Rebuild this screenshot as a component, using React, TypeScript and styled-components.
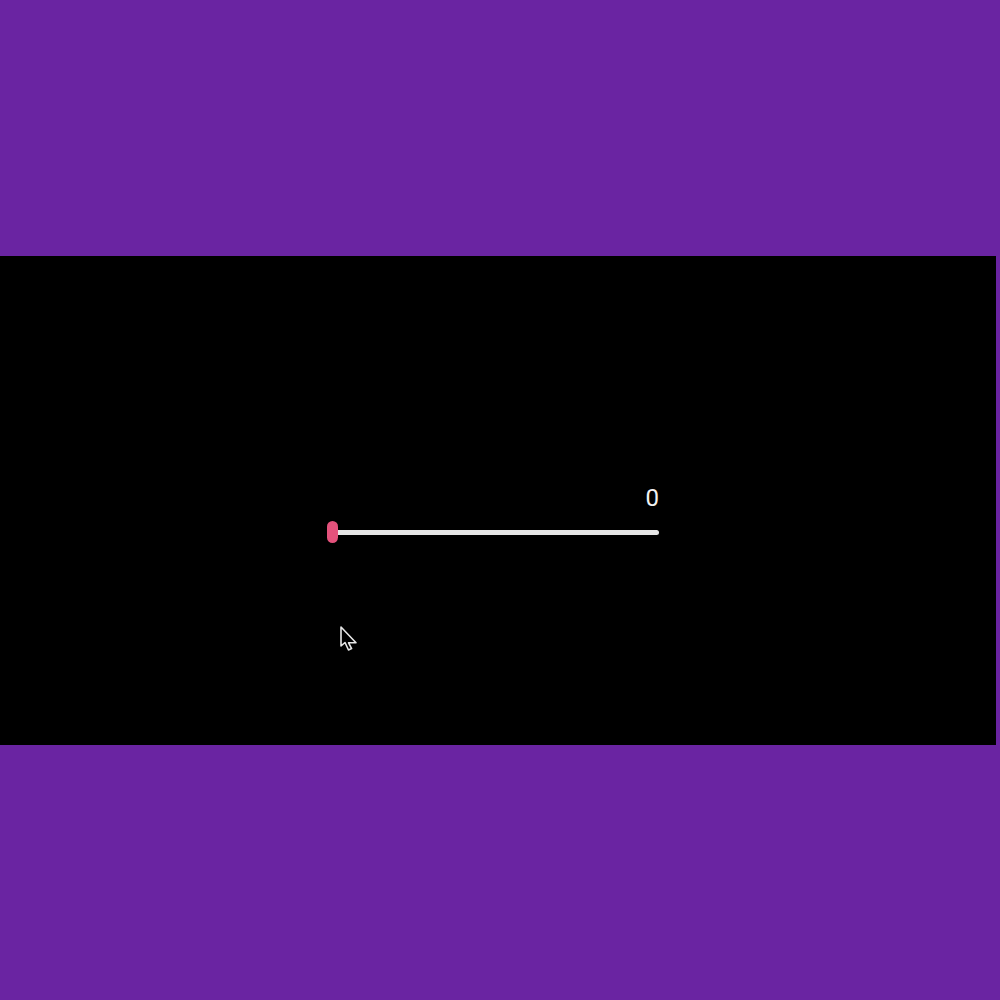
import React, { useState } from 'react';
import styled, { createGlobalStyle } from 'styled-components';

const GlobalStyle = createGlobalStyle`
  html, body {
    margin: 0;
    padding: 0;
    background: #6a24a2;
  }
  body {
    font-family: Roboto, "Liberation Sans", sans-serif;
  }
`;

const Page = styled.div`
  width: 1000px;
  height: 1000px;
  padding-top: 256px;
  box-sizing: border-box;
`;

const Stage = styled.div`
  position: relative;
  width: 996px;
  height: 489px;
  background: #000;
  display: flex;
  justify-content: flex-start;
  padding: 233px 0 0 327px;
  box-sizing: border-box;
`;

const SliderBox = styled.div`
  width: 332px;
  display: flex;
  flex-direction: column;
`;

const Value = styled.div`
  align-self: flex-end;
  color: #f2f2f2;
  font-size: 24px;
  line-height: 18px;
  height: 18px;
`;

const Rail = styled.div`
  position: relative;
  margin-top: 14px;
  height: 22px;
  display: flex;
  align-items: center;
`;

const Track = styled.div`
  flex: 1;
  height: 5px;
  margin-left: 9px;
  border-radius: 3px;
  background: #e6e6e6;
`;

const Thumb = styled.div<{ $pos: number }>`
  position: absolute;
  top: 0;
  left: ${(p) => p.$pos}%;
  width: 11px;
  height: 22px;
  border-radius: 6px;
  background: #e4527c;
`;

const Pointer = styled.svg`
  position: absolute;
  left: 339px;
  top: 369px;
`;

function App(): React.ReactElement {
  const [value] = useState(0);

  return (
    <Page>
      <GlobalStyle />
      <Stage>
        <SliderBox>
          <Value>{value}</Value>
          <Rail>
            <Track />
            <Thumb $pos={value} />
          </Rail>
        </SliderBox>
        <Pointer width="22" height="28" viewBox="0 0 22 28">
          <path
            d="M2 2 L2 21 L6 17.5 L9.5 25 L12.6 23.6 L9.6 17.8 L17 17.8 Z"
            fill="#000"
            stroke="#e6e6e6"
            strokeWidth="1.6"
            strokeLinejoin="round"
          />
        </Pointer>
      </Stage>
    </Page>
  );
}

export default App;
